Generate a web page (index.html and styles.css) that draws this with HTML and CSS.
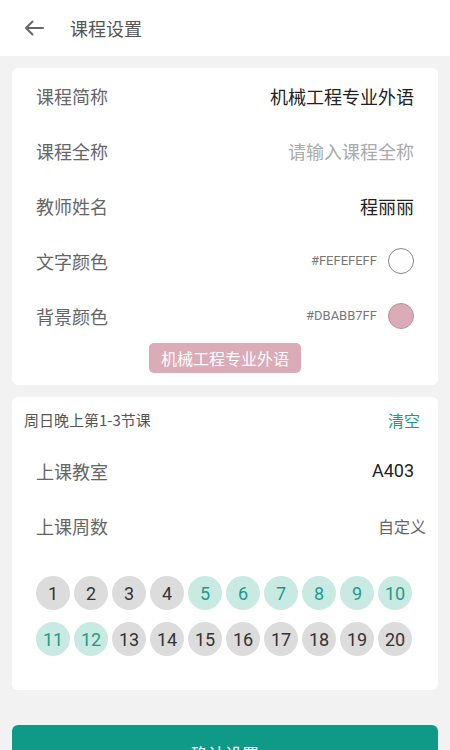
FILE: index.html
```html
<!DOCTYPE html>
<html lang="zh">
<head>
<meta charset="utf-8">
<link rel="stylesheet" href="styles.css">
</head>
<body>
<header class="topbar">
  <svg class="back" width="20" height="16" viewBox="0 0 20 16"><path d="M19 8H2M8.5 1.5L2 8l6.5 6.5" fill="none" stroke="#666" stroke-width="2" stroke-linecap="round" stroke-linejoin="round"/></svg>
  <span class="title">课程设置</span>
</header>
<main class="content">
  <section class="card">
    <div class="row"><span class="label">课程简称</span><span class="value">机械工程专业外语</span></div>
    <div class="row"><span class="label">课程全称</span><span class="value placeholder">请输入课程全称</span></div>
    <div class="row"><span class="label">教师姓名</span><span class="value">程丽丽</span></div>
    <div class="row"><span class="label">文字颜色</span><span class="color-pick"><span class="hex">#FEFEFEFF</span><span class="swatch swatch-white"></span></span></div>
    <div class="row"><span class="label">背景颜色</span><span class="color-pick"><span class="hex">#DBABB7FF</span><span class="swatch swatch-pink"></span></span></div>
    <div class="preview-wrap"><span class="preview">机械工程专业外语</span></div>
  </section>
  <section class="card card-time">
    <div class="time-head"><span class="time-title">周日晚上第1-3节课</span><span class="clear">清空</span></div>
    <div class="row"><span class="label">上课教室</span><span class="value num">A403</span></div>
    <div class="row row-weeks"><span class="label">上课周数</span><span class="custom">自定义</span></div>
    <div class="weeks">
      <span class="wk">1</span><span class="wk">2</span><span class="wk">3</span><span class="wk">4</span><span class="wk on">5</span><span class="wk on">6</span><span class="wk on">7</span><span class="wk on">8</span><span class="wk on">9</span><span class="wk on">10</span>
      <span class="wk on">11</span><span class="wk on">12</span><span class="wk">13</span><span class="wk">14</span><span class="wk">15</span><span class="wk">16</span><span class="wk">17</span><span class="wk">18</span><span class="wk">19</span><span class="wk">20</span>
    </div>
  </section>
  <button class="confirm">确认设置</button>
</main>
</body>
</html>
```

FILE: styles.css
```css
* { box-sizing: border-box; }
html, body { margin: 0; padding: 0; }
body {
  background: #f2f2f2;
  font-family: "Noto Sans CJK SC", "Noto Sans", sans-serif;
  width: 450px;
  height: 750px;
  overflow: hidden;
}
.topbar {
  height: 56px;
  background: #fff;
  display: flex;
  align-items: center;
  padding-left: 24px;
}
.back { display: block; }
.title {
  margin-left: 26px;
  font-size: 18px;
  color: #555;
  line-height: 24px;
}
.content {
  padding: 12px 12px 0;
}
.card {
  background: #fff;
  border-radius: 6px;
}
.row {
  height: 55px;
  display: flex;
  align-items: center;
  justify-content: space-between;
  padding: 0 24px;
}
.label {
  font-size: 18px;
  color: #666;
  line-height: 24px;
}
.value {
  font-size: 18px;
  color: #222;
  line-height: 24px;
}
.value.placeholder { color: #aaa; }
.value.num { font-family: Roboto, "Noto Sans", sans-serif; color: #222; }
.color-pick {
  display: flex;
  align-items: center;
}
.hex {
  font-family: Roboto, "Noto Sans", sans-serif;
  font-size: 13px;
  color: #777;
  margin-right: 11px;
}
.swatch {
  width: 26px;
  height: 26px;
  border-radius: 50%;
  display: block;
}
.swatch-white { background: #fefefe; border: 1px solid #888; }
.swatch-pink { background: #dbabb7; border: 1px solid #b9939d; }
.preview-wrap {
  display: flex;
  justify-content: center;
  padding-bottom: 12px;
}
.preview {
  background: #dbabb7;
  color: #fefefe;
  font-size: 16px;
  line-height: 30px;
  height: 30px;
  padding: 0 12px;
  border-radius: 5px;
}
.card-time {
  margin-top: 12px;
  padding-bottom: 34px;
}
.time-head {
  height: 46px;
  display: flex;
  align-items: center;
  justify-content: space-between;
  padding: 0 18px 0 12px;
}
.time-title {
  font-size: 15px;
  color: #555;
  line-height: 20px;
}
.clear {
  font-size: 16px;
  color: #1f9a8a;
  line-height: 22px;
}
.row-weeks { padding-right: 12px; }
.custom {
  font-size: 16px;
  color: #666;
  line-height: 22px;
}
.weeks {
  margin-top: 23px;
  padding: 0 24px;
  display: grid;
  grid-template-columns: repeat(10, 34px);
  column-gap: 4px;
  row-gap: 12px;
}
.wk {
  width: 34px;
  height: 34px;
  border-radius: 50%;
  background: #dcdcdc;
  color: #333;
  font-family: Roboto, "Noto Sans", sans-serif;
  font-size: 18px;
  display: flex;
  align-items: center;
  justify-content: center;
}
.wk.on {
  background: #c8eae3;
  color: #1f9a8a;
}
.confirm {
  display: block;
  width: 100%;
  margin-top: 35px;
  height: 56px;
  border: none;
  border-radius: 6px;
  background: #0f9a88;
  color: #fff;
  font-family: "Noto Sans CJK SC", sans-serif;
  font-size: 17px;
  padding: 0;
}
```
